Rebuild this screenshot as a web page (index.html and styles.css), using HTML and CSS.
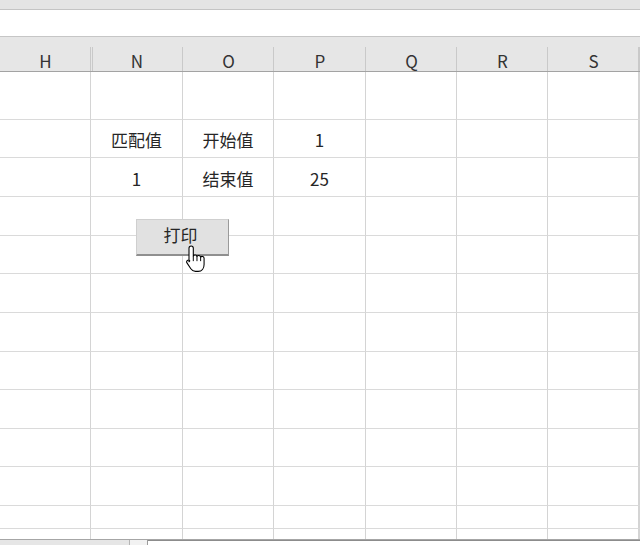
FILE: index.html
```
<!DOCTYPE html>
<html lang="zh-CN">
<head>
<meta charset="utf-8">
<title>打印</title>
<link rel="stylesheet" href="styles.css">
</head>
<body>
<div class="app">
  <div class="ribbon-edge"></div>
  <div class="formula-bar"></div>
  <div class="col-header">
    <div class="hc">H</div>
    <div class="hc hidden-left">N</div>
    <div class="hc">O</div>
    <div class="hc">P</div>
    <div class="hc">Q</div>
    <div class="hc">R</div>
    <div class="hc">S</div>
    <div class="hc"></div>
  </div>
  <div class="sheet">
    <div class="row h48"><div class="c"></div><div class="c"></div><div class="c"></div><div class="c"></div><div class="c"></div><div class="c"></div><div class="c"></div><div class="c"></div></div>
    <div class="row h38"><div class="c"></div><div class="c">匹配值</div><div class="c">开始值</div><div class="c">1</div><div class="c"></div><div class="c"></div><div class="c"></div><div class="c"></div></div>
    <div class="row h39"><div class="c"></div><div class="c">1</div><div class="c">结束值</div><div class="c">25</div><div class="c"></div><div class="c"></div><div class="c"></div><div class="c"></div></div>
    <div class="row h39"><div class="c"></div><div class="c"></div><div class="c"></div><div class="c"></div><div class="c"></div><div class="c"></div><div class="c"></div><div class="c"></div></div>
    <div class="row h38"><div class="c"></div><div class="c"></div><div class="c"></div><div class="c"></div><div class="c"></div><div class="c"></div><div class="c"></div><div class="c"></div></div>
    <div class="row h39"><div class="c"></div><div class="c"></div><div class="c"></div><div class="c"></div><div class="c"></div><div class="c"></div><div class="c"></div><div class="c"></div></div>
    <div class="row h39"><div class="c"></div><div class="c"></div><div class="c"></div><div class="c"></div><div class="c"></div><div class="c"></div><div class="c"></div><div class="c"></div></div>
    <div class="row h38"><div class="c"></div><div class="c"></div><div class="c"></div><div class="c"></div><div class="c"></div><div class="c"></div><div class="c"></div><div class="c"></div></div>
    <div class="row h39"><div class="c"></div><div class="c"></div><div class="c"></div><div class="c"></div><div class="c"></div><div class="c"></div><div class="c"></div><div class="c"></div></div>
    <div class="row h38"><div class="c"></div><div class="c"></div><div class="c"></div><div class="c"></div><div class="c"></div><div class="c"></div><div class="c"></div><div class="c"></div></div>
    <div class="row h39"><div class="c"></div><div class="c"></div><div class="c"></div><div class="c"></div><div class="c"></div><div class="c"></div><div class="c"></div><div class="c"></div></div>
    <div class="row h23"><div class="c"></div><div class="c"></div><div class="c"></div><div class="c"></div><div class="c"></div><div class="c"></div><div class="c"></div><div class="c"></div></div>
    <div class="row h10"><div class="c"></div><div class="c"></div><div class="c"></div><div class="c"></div><div class="c"></div><div class="c"></div><div class="c"></div><div class="c"></div></div>

    <button class="print-btn" type="button">打印</button>
    <svg class="cursor" viewBox="0 0 20 26" width="22" height="28" aria-hidden="true">
      <path d="M3.5 3 a2 2 0 0 1 4 0 V10.3 a1.8 1.8 0 0 1 3.4 0.4 a1.8 1.8 0 0 1 3.4 0.6 a1.8 1.8 0 0 1 3.2 1.2 V18 c0 3.5 -2 6.5 -5.5 6.5 H9.5 c-2 0 -3.2 -0.9 -4.3 -2.5 L1.6 16.6 a1.6 1.6 0 0 1 2.6 -1.9 L3.5 15.6 Z" fill="#fff" stroke="#000" stroke-width="1" stroke-linejoin="round"/>
      <path d="M7.5 10.3 V15 M10.9 10.7 V15 M14.3 11.3 V15" fill="none" stroke="#000" stroke-width="0.9"/>
    </svg>
  </div>
  <div class="bottom-bar">
    <div class="tabs"></div>
    <div class="split"></div>
    <div class="hscroll"></div>
  </div>
</div>
</body>
</html>
```
FILE: styles.css
```
* { box-sizing: border-box; }
html, body { margin: 0; padding: 0; }
body {
  width: 640px;
  height: 545px;
  overflow: hidden;
  background: #fff;
  font-family: "Noto Sans CJK SC", "Noto Sans", sans-serif;
  color: #262626;
}
.app { width: 640px; height: 545px; display: flex; flex-direction: column; }

.ribbon-edge {
  height: 10px;
  background: #e4e4e4;
  border-bottom: 1px solid #c4c4c4;
}
.formula-bar {
  height: 27px;
  background: #fff;
  border-bottom: 1px solid #c6c6c6;
}
.col-header {
  height: 35px;
  display: grid;
  grid-template-columns: 91px 92px 91px 92px 91px 91px 91px 1fr;
  background: #e6e6e6;
  border-bottom: 1px solid #a3a3a3;
}
.hc {
  display: flex;
  align-items: flex-end;
  justify-content: center;
  padding-bottom: 0;
  font-size: 17px;
  line-height: 20px;
  color: #333;
  background: linear-gradient(#c9c9c9, #c9c9c9) right bottom / 1px 24px no-repeat;
}
.hc.hidden-left {
  background:
    linear-gradient(#c9c9c9, #c9c9c9) right bottom / 1px 24px no-repeat,
    linear-gradient(#c9c9c9, #c9c9c9) 1px bottom / 1px 24px no-repeat;
}

.sheet { position: relative; flex: 1; overflow: hidden; }
.row {
  display: grid;
  grid-template-columns: 91px 92px 91px 92px 91px 91px 91px 1fr;
}
.h48 { height: 48px; }
.h38 { height: 38px; }
.h39 { height: 39px; }
.h23 { height: 23px; }
.h10 { height: 10px; }
.c {
  border-right: 1px solid #d4d4d4;
  border-bottom: 1px solid #dadada;
  display: flex;
  align-items: center;
  justify-content: center;
  padding-top: 3px;
  font-size: 17px;
  line-height: 20px;
  color: #262626;
}
.h10 .c { border-bottom: none; }

.print-btn {
  position: absolute;
  left: 136px;
  top: 147px;
  width: 93px;
  height: 37px;
  margin: 0;
  padding: 0 4px 4px 0;
  background: #e1e1e1;
  border: 1px solid #cfcfcf;
  border-right-color: #9a9a9a;
  border-bottom: 2px solid #8f8f8f;
  font-family: "Noto Sans CJK SC", sans-serif;
  font-size: 17px;
  line-height: 20px;
  color: #262626;
}
.cursor {
  position: absolute;
  left: 185px;
  top: 173px;
}

.bottom-bar {
  height: 6px;
  display: flex;
  border-top: 1px solid #a6a6a6;
  background: #e8e8e8;
}
.tabs { width: 129px; background: #e6e6e6; }
.split { width: 19px; border-left: 1px solid #b5b5b5; border-right: 1px solid #9c9c9c; background: #f2f2f2; }
.hscroll { flex: 1; background: #fff; border-top: 1px solid #8c8c8c; }
```
